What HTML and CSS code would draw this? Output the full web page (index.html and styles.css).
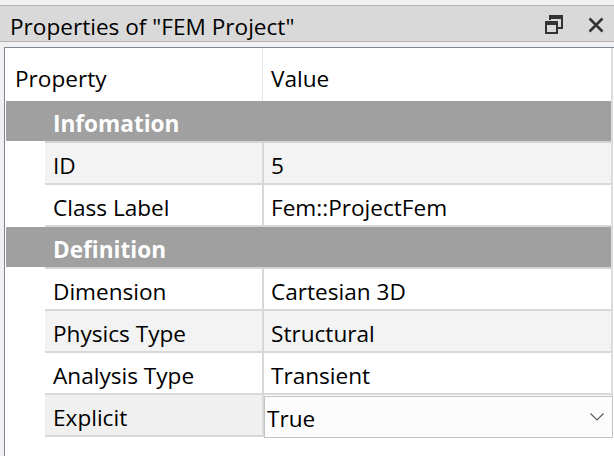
FILE: index.html
```html
<!DOCTYPE html>
<html>
<head>
<meta charset="utf-8">
<link rel="stylesheet" href="styles.css">
</head>
<body>
<div class="panel">
  <div class="titlebar">
    <span class="title">Properties of "FEM Project"</span>
    <span class="tools">
      <svg class="restore" width="18" height="19" viewBox="0 0 18 19">
        <path d="M5 5 V1 H17 V13 H13" fill="none" stroke="#333" stroke-width="2"/>
        <rect x="1" y="7" width="11" height="11" fill="none" stroke="#333" stroke-width="2"/>
        <rect x="1" y="7" width="11" height="3" fill="#333"/>
        <rect x="5" y="1" width="12" height="3" fill="#333"/>
      </svg>
      <svg class="close" width="16" height="16" viewBox="0 0 16 16">
        <path d="M1.5 1.5 L14.5 14.5 M14.5 1.5 L1.5 14.5" stroke="#333" stroke-width="2.6"/>
      </svg>
    </span>
  </div>
  <div class="tree">
    <div class="header">
      <div class="hcell name">Property</div>
      <div class="hcell value">Value</div>
    </div>
    <div class="group">
      <div class="indent"></div>
      <div class="glabel">Infomation</div>
    </div>
    <div class="row alt">
      <div class="indent"></div>
      <div class="cell name">ID</div>
      <div class="cell value">5</div>
    </div>
    <div class="row">
      <div class="indent"></div>
      <div class="cell name">Class Label</div>
      <div class="cell value">Fem::ProjectFem</div>
    </div>
    <div class="group">
      <div class="indent"></div>
      <div class="glabel">Definition</div>
    </div>
    <div class="row">
      <div class="indent"></div>
      <div class="cell name">Dimension</div>
      <div class="cell value">Cartesian 3D</div>
    </div>
    <div class="row alt">
      <div class="indent"></div>
      <div class="cell name">Physics Type</div>
      <div class="cell value">Structural</div>
    </div>
    <div class="row">
      <div class="indent"></div>
      <div class="cell name">Analysis Type</div>
      <div class="cell value">Transient</div>
    </div>
    <div class="row edit">
      <div class="indent"></div>
      <div class="cell name sel">Explicit</div>
      <div class="cell combo">
        <span class="ctext">True</span>
        <svg class="chev" width="14" height="8" viewBox="0 0 14 8">
          <path d="M0.5 0.5 L7 7 L13.5 0.5" fill="none" stroke="#555" stroke-width="1.1"/>
        </svg>
      </div>
    </div>
  </div>
</div>
</body>
</html>
```

FILE: styles.css
```css
html, body {
  margin: 0;
  padding: 0;
}
body {
  width: 614px;
  height: 456px;
  overflow: hidden;
  background: #f0f0f0;
  font-family: "Open Sans", "Noto Sans", sans-serif;
  font-size: 22.6px;
  color: #000;
}
.panel {
  padding-top: 5px;
}
.titlebar {
  height: 35px;
  border-top: 1px solid #b4b4b4;
  border-bottom: 1px solid #b4b4b4;
  background: #d9d9d9;
  display: flex;
  align-items: center;
  padding-left: 10px;
  padding-right: 10px;
}
.title {
  flex: 1;
  line-height: 35px;
  padding-top: 5px;
  white-space: nowrap;
}
.tools {
  display: flex;
  align-items: center;
  gap: 25px;
  padding-top: 3px;
}
.restore {
  display: block;
  margin-top: -2px;
}
.close {
  display: block;
}
.tree {
  margin: 5px 0 0 4px;
  width: 607px;
  height: 420px;
  border: 1px solid #7c8794;
  border-bottom: none;
  background: #fff;
  padding: 0 1px 0 1px;
  box-sizing: content-box;
}
.header {
  display: flex;
  height: 53px;
  border-right: 2px solid #dcdcdc;
  margin-left: -1px;
}
.hcell {
  line-height: 53px;
  padding-top: 4px;
  box-sizing: border-box;
  white-space: nowrap;
}
.hcell.name {
  width: 258px;
  padding-left: 10px;
  border-right: 1px solid #e3e3e3;
}
.hcell.value {
  flex: 1;
  padding-left: 8px;
}
.group {
  display: flex;
  height: 42px;
  border-right: 2px solid #dcdcdc;
}
.group .indent {
  width: 39px;
  height: 40px;
  background: #a0a0a0;
  border-bottom: 2px solid #fff;
}
.glabel {
  flex: 1;
  height: 40px;
  line-height: 45px;
  overflow: hidden;
  background: #a0a0a0;
  border-bottom: 2px solid #d4d4d4;
  color: #fff;
  font-weight: bold;
  padding-left: 8px;
}
.row {
  display: flex;
  height: 42px;
  border-right: 2px solid #dcdcdc;
}
.row .indent {
  width: 39px;
  background: #fff;
}
.cell {
  height: 40px;
  line-height: 45px;
  overflow: hidden;
  border-bottom: 2px solid #d8d8d8;
  white-space: nowrap;
}
.cell.name {
  width: 209px;
  padding-left: 8px;
  border-right: 2px solid #d8d8d8;
}
.cell.value {
  flex: 1;
  padding-left: 7px;
}
.row.alt .cell {
  background: #f3f3f3;
}
.cell.sel {
  background: #f0f0f0;
}
.cell.combo {
  flex: 1;
  display: flex;
  align-items: center;
  box-sizing: border-box;
  height: 42px;
  margin-top: 1px;
  border: 1px solid #c4c4c4;
  background: #fcfcfc;
  padding-left: 2px;
  padding-right: 8px;
  margin-right: -2px;
}
.ctext {
  flex: 1;
  line-height: 40px;
  padding-top: 3px;
}
.chev {
  display: block;
}
```
